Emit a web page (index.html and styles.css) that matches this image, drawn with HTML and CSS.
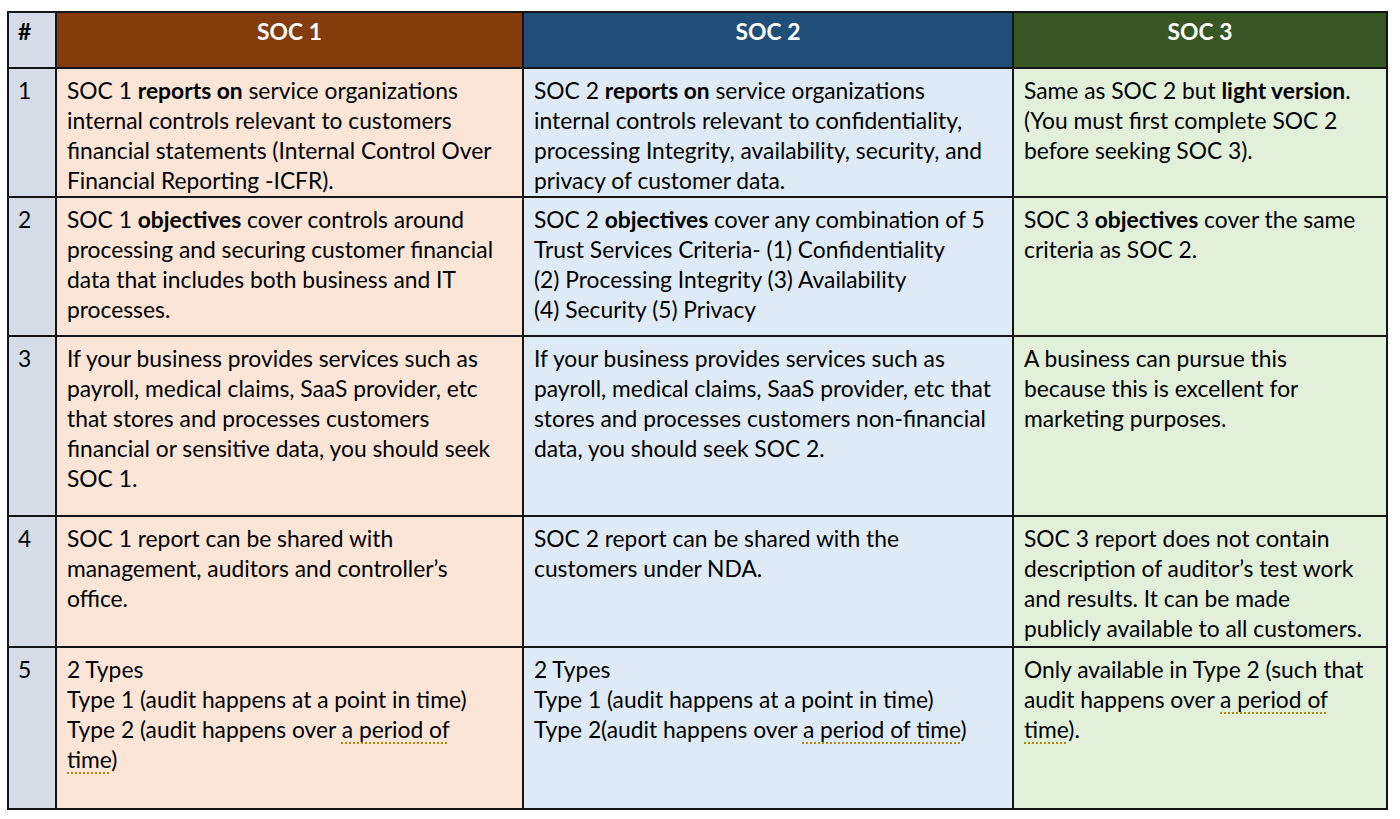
FILE: index.html
```html
<!DOCTYPE html>
<html>
<head>
<meta charset="utf-8">
<link rel="stylesheet" href="styles.css">
</head>
<body>
<div class="grid">
  <div class="cell num head-num">#</div>
  <div class="cell head h1">SOC 1</div>
  <div class="cell head h2">SOC 2</div>
  <div class="cell head h3">SOC 3</div>

  <div class="cell num">1</div>
  <div class="cell c1">SOC 1 <b>reports on</b> service organizations<br>internal controls relevant to customers<br>financial statements (Internal Control Over<br>Financial Reporting -ICFR).</div>
  <div class="cell c2">SOC 2 <b>reports on</b> service organizations<br>internal controls relevant to confidentiality,<br>processing Integrity, availability, security, and<br>privacy of customer data.</div>
  <div class="cell c3">Same as SOC 2 but <b>light version</b>.<br>(You must first complete SOC 2<br>before seeking SOC 3).</div>

  <div class="cell num">2</div>
  <div class="cell c1">SOC 1 <b>objectives</b> cover controls around<br>processing and securing customer financial<br>data that includes both business and IT<br>processes.</div>
  <div class="cell c2">SOC 2 <b>objectives</b> cover any combination of 5<br>Trust Services Criteria- (1) Confidentiality<br>(2) Processing Integrity (3) Availability<br>(4) Security (5) Privacy</div>
  <div class="cell c3">SOC 3 <b>objectives</b> cover the same<br>criteria as SOC 2.</div>

  <div class="cell num">3</div>
  <div class="cell c1">If your business provides services such as<br>payroll, medical claims, SaaS provider, etc<br>that stores and processes customers<br>financial or sensitive data, you should seek<br>SOC 1.</div>
  <div class="cell c2">If your business provides services such as<br>payroll, medical claims, SaaS provider, etc that<br>stores and processes customers non-financial<br>data, you should seek SOC 2.</div>
  <div class="cell c3">A business can pursue this<br>because this is excellent for<br>marketing purposes.</div>

  <div class="cell num">4</div>
  <div class="cell c1">SOC 1 report can be shared with<br>management, auditors and controller’s<br>office.</div>
  <div class="cell c2">SOC 2 report can be shared with the<br>customers under NDA.</div>
  <div class="cell c3">SOC 3 report does not contain<br>description of auditor’s test work<br>and results. It can be made<br>publicly available to all customers.</div>

  <div class="cell num">5</div>
  <div class="cell c1">2 Types<br>Type 1 (audit happens at a point in time)<br>Type 2 (audit happens over <span class="gram">a period of</span><br><span class="gram">time</span>)</div>
  <div class="cell c2">2 Types<br>Type 1 (audit happens at a point in time)<br>Type 2(audit happens over <span class="gram">a period of time</span>)</div>
  <div class="cell c3">Only available in Type 2 (such that<br>audit happens over <span class="gram">a period of</span><br><span class="gram">time</span>).</div>
</div>
</body>
</html>
```
FILE: styles.css
```css
html, body {
  margin: 0;
  padding: 0;
  background: #ffffff;
}

body {
  padding: 11px 0 0 7px;
  font-family: Lato, "Open Sans", sans-serif;
  font-size: 22.8px;
  color: #000;
}

.grid {
  display: grid;
  width: max-content;
  grid-template-columns: 46px 465px 488px 372px;
  grid-template-rows: 54px 127px 137px 178px 129px 160px;
  gap: 2px;
  padding: 2px;
  background: #151515;
}

.cell {
  line-height: 30px;
  padding: 6px 0 0 10px;
  white-space: nowrap;
}

.num {
  background: #d6dce5;
  padding-left: 9px;
}

.head-num {
  font-weight: bold;
  padding-top: 3px;
}

.head {
  color: #ffffff;
  font-weight: bold;
  text-align: center;
  padding: 3px 0 0 0;
}

.h1 { background: #843c0c; }
.h2 { background: #1f4e79; }
.h3 { background: #375623; }

.c1 { background: #fbe5d6; }
.c2 { background: #deebf7; }
.c3 { background: #e2f0d9; }

.gram {
  text-decoration: underline dotted #b8860b;
  text-decoration-thickness: 2px;
  text-underline-offset: 4px;
}
```
